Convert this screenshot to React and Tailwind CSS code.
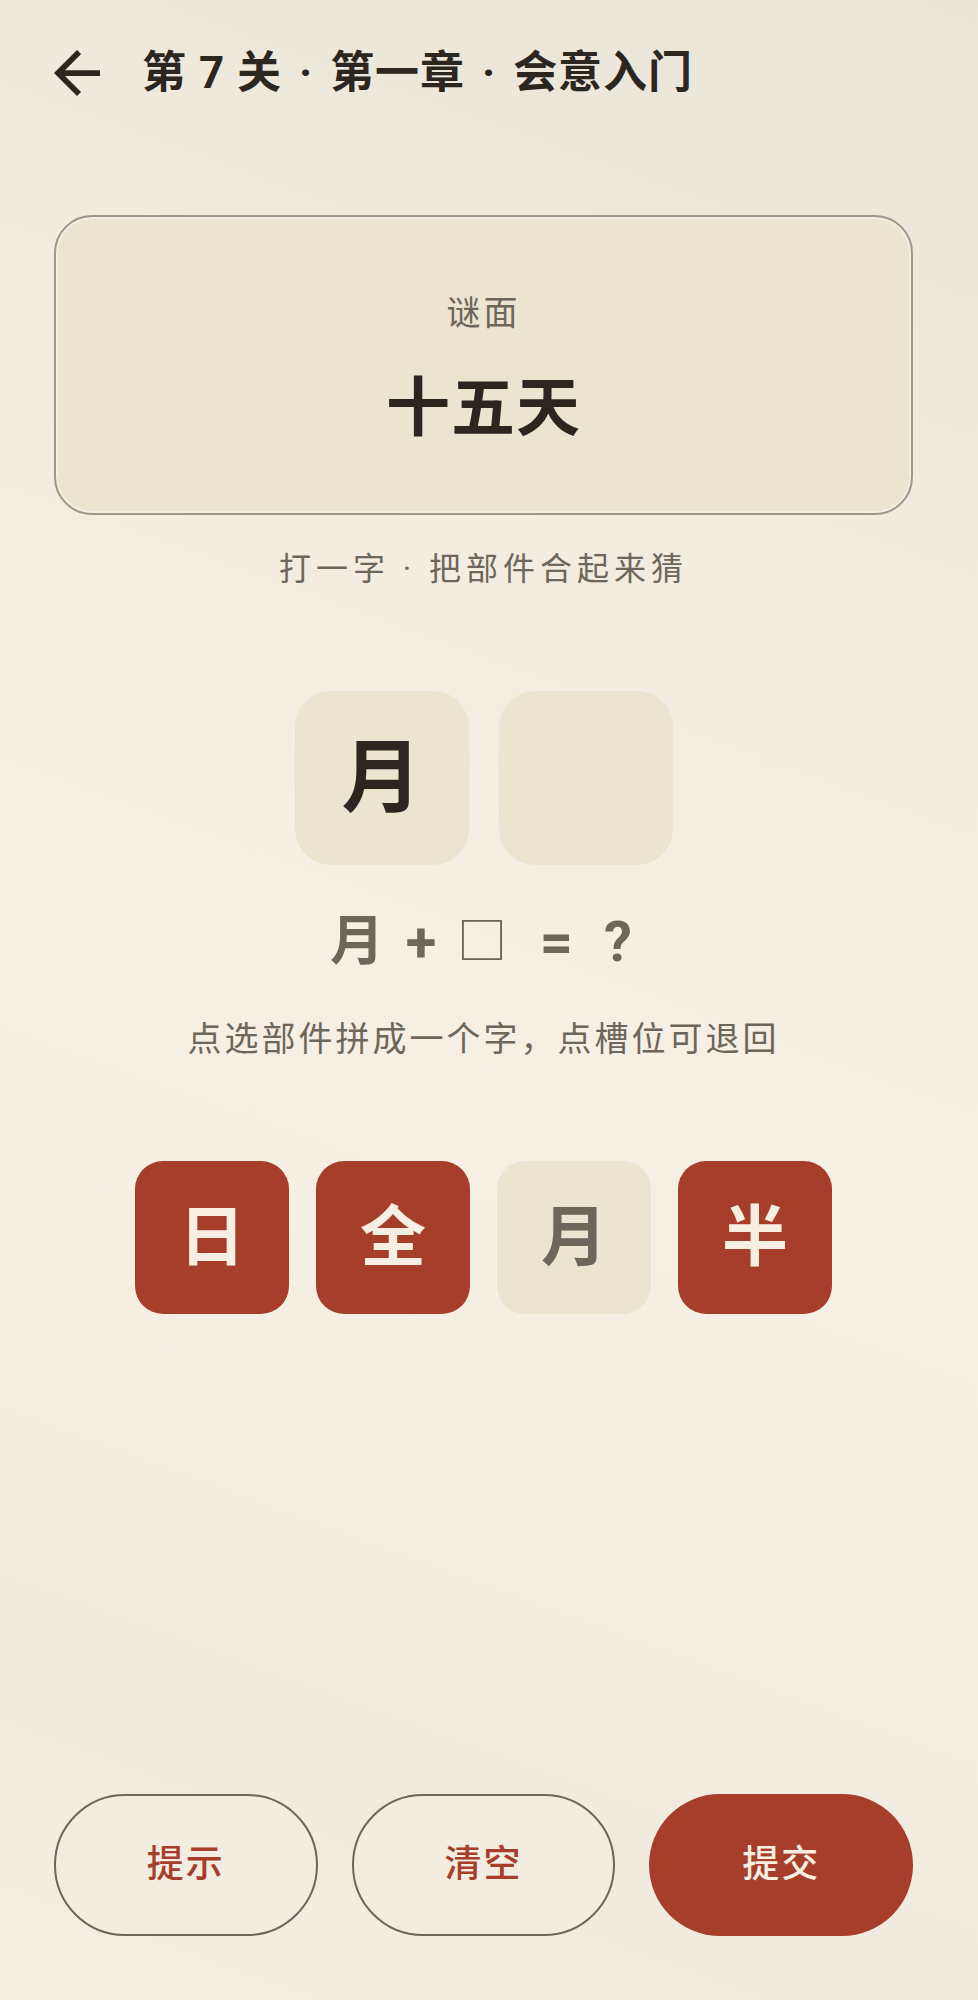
import React from "react";

const CJK = { fontFamily: 'Roboto, "Noto Sans CJK SC", "Noto Sans", sans-serif' };

function Dot() {
  return <span className="inline-block w-[48px] text-center">·</span>;
}

export default function App() {
  return (
    <div
      className="min-h-[2000px] w-full pl-[54px] pr-[65px] flex flex-col bg-[linear-gradient(200deg,#e9e4d8_0%,#f2ece0_25%,#f6efe4_50%,#f5eee3_70%,#f1ebdf_85%,#f5eee3_100%)]"
      style={CJK}
    >
      {/* Header */}
      <div className="mt-[50px] h-[46px] flex items-center gap-[42px]">
        <svg width="46" height="46" viewBox="4 4 16 16" className="shrink-0">
          <path
            d="M20 11H7.83l5.59-5.59L12 4l-8 8 8 8 1.41-1.41L7.83 13H20v-2z"
            fill="#2b2620"
          />
        </svg>
        <h1 className="text-[44px] leading-[46px] font-bold text-[#2b2620] tracking-[1px] whitespace-nowrap">
          第 7 关<Dot />第一章<Dot />会意入门
        </h1>
      </div>

      {/* Riddle card */}
      <div className="mt-[119px] h-[300px] rounded-[38px] border-2 border-[#9f9787] bg-[#ebe4cf] shadow-[inset_0_0_0_2px_rgba(255,255,255,0.4)] flex flex-col items-center pt-[74px]">
        <div className="text-[34px] leading-[44px] tracking-[3px] text-[#6d665a]">谜面</div>
        <div className="mt-[34px] text-[64px] leading-[80px] font-bold text-[#2b2620] tracking-[1px]">
          十五天
        </div>
      </div>

      <div className="mt-[32px] text-center text-[32px] leading-[44px] tracking-[5px] text-[#6d665a]">
        打一字 · 把部件合起来猜
      </div>

      {/* Slots */}
      <div className="mt-[100px] flex justify-center gap-[30px]">
        <div className="w-[174px] h-[174px] rounded-[36px] bg-[#ebe4cf] flex items-center justify-center">
          <span className="text-[80px] leading-none font-bold text-[#2b2620]">月</span>
        </div>
        <div className="w-[174px] h-[174px] rounded-[36px] bg-[#ebe4cf]" />
      </div>

      {/* Equation */}
      <div className="mt-[45px] h-[64px] ml-[272px] flex items-center text-[#6d665a] font-bold">
        <span className="w-[62px] text-center text-[54px] leading-none">月</span>
        <span className="w-[66px] text-center text-[56px] leading-none">+</span>
        <span className="w-[56px] text-center text-[50px] leading-none font-normal">□</span>
        <span className="w-[93px] text-center text-[58px] leading-none">=</span>
        <span className="w-[30px] text-center text-[56px] leading-none">?</span>
      </div>

      <div className="mt-[42px] text-center text-[34px] leading-[46px] tracking-[3px] text-[#6d665a]">
        点选部件拼成一个字，点槽位可退回
      </div>

      {/* Pieces */}
      <div className="mt-[99px] flex justify-center gap-[27px]">
        {[
          { c: "日", used: false },
          { c: "全", used: false },
          { c: "月", used: true },
          { c: "半", used: false },
        ].map((p, i) =>
          p.used ? (
            <div
              key={i}
              className="w-[154px] h-[153px] rounded-[28px] bg-[#ebe4cf] flex items-center justify-center"
            >
              <span className="text-[66px] leading-none font-bold text-[#6d665a]">{p.c}</span>
            </div>
          ) : (
            <div
              key={i}
              className="w-[154px] h-[153px] rounded-[28px] bg-[#a63e2b] flex items-center justify-center"
            >
              <span className="text-[66px] leading-none font-bold text-[#f7efe2]">{p.c}</span>
            </div>
          )
        )}
      </div>

      {/* Buttons */}
      <div className="mt-[480px] grid grid-cols-3 gap-[34px]">
        <button className="h-[142px] rounded-full border-[2.5px] border-[#6d665a] bg-[#f3ede1] text-[37px] font-medium text-[#a63e2b] tracking-[2px]">
          提示
        </button>
        <button className="h-[142px] rounded-full border-[2.5px] border-[#6d665a] bg-[#f3ede1] text-[37px] font-medium text-[#a63e2b] tracking-[2px]">
          清空
        </button>
        <button className="h-[142px] rounded-full bg-[#a63e2b] text-[37px] font-medium text-[#f7efe2] tracking-[2px]">
          提交
        </button>
      </div>
    </div>
  );
}
